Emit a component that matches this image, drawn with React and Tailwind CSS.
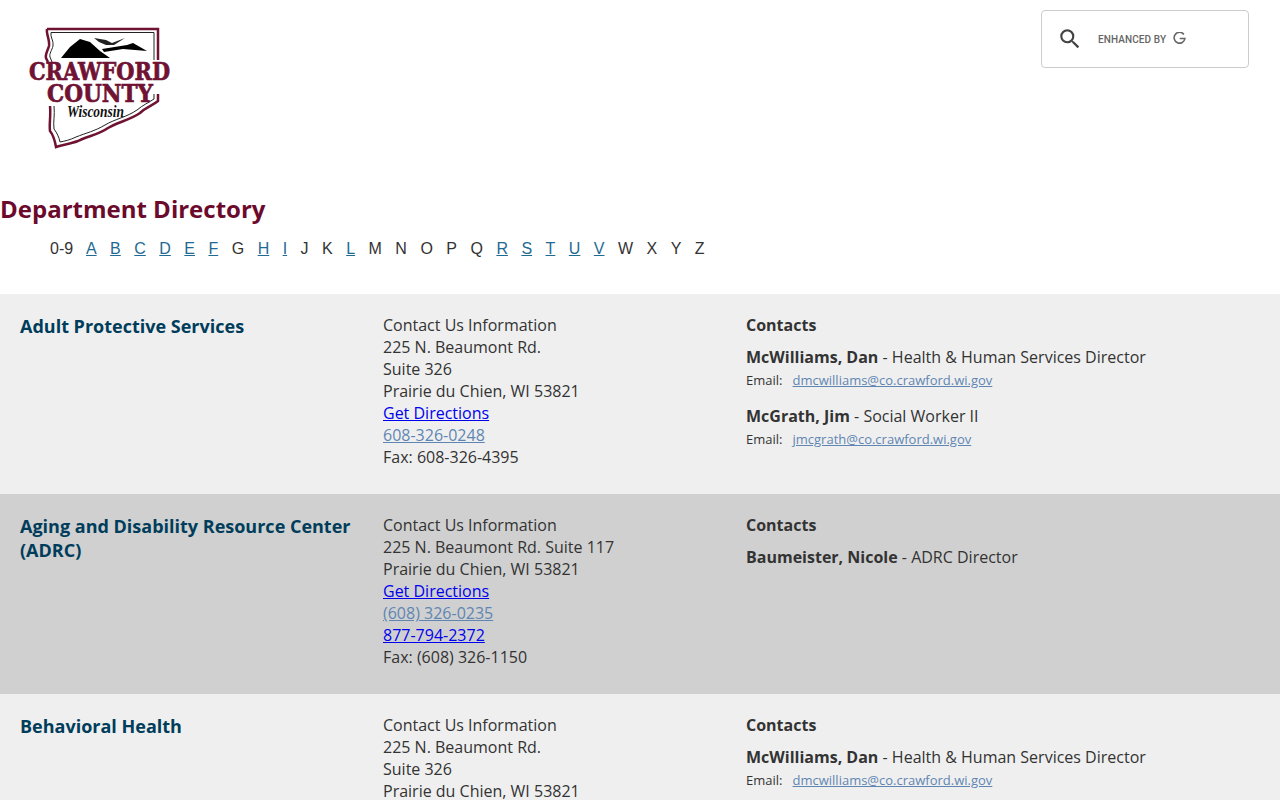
import React from 'react';
import { MdSearch } from 'react-icons/md';

const letters = [
  ['A', 1], ['B', 1], ['C', 1], ['D', 1], ['E', 1], ['F', 1], ['G', 0], ['H', 1], ['I', 1], ['J', 0], ['K', 0], ['L', 1], ['M', 0],
  ['N', 0], ['O', 0], ['P', 0], ['Q', 0], ['R', 1], ['S', 1], ['T', 1], ['U', 1], ['V', 1], ['W', 0], ['X', 0], ['Y', 0], ['Z', 0],
];

const dan = { name: 'McWilliams, Dan', title: 'Health & Human Services Director', email: 'dmcwilliams@co.crawford.wi.gov' };
const jim = { name: 'McGrath, Jim', title: 'Social Worker II', email: 'jmcgrath@co.crawford.wi.gov' };
const nicole = { name: 'Baumeister, Nicole', title: 'ADRC Director' };

const departments = [
  {
    name: 'Adult Protective Services',
    bg: 'bg-[#efefef]',
    lines: ['225 N. Beaumont Rd.', 'Suite 326', 'Prairie du Chien, WI 53821'],
    phones: ['608-326-0248'],
    fax: 'Fax: 608-326-4395',
    contacts: [dan, jim],
  },
  {
    name: 'Aging and Disability Resource Center (ADRC)',
    bg: 'bg-[#d0d0d0]',
    lines: ['225 N. Beaumont Rd. Suite 117', 'Prairie du Chien, WI 53821'],
    phones: ['(608) 326-0235'],
    tollFree: '877-794-2372',
    fax: 'Fax: (608) 326-1150',
    contacts: [nicole],
  },
  {
    name: 'Behavioral Health',
    bg: 'bg-[#efefef]',
    lines: ['225 N. Beaumont Rd.', 'Suite 326', 'Prairie du Chien, WI 53821'],
    phones: ['608-326-0248'],
    fax: 'Fax: 608-326-4395',
    contacts: [dan],
  },
];

function Logo() {
  const outline = 'M47 29 L158 29 L158 60 M158 94 L158 101 C152 106 146 107 140 113 C130 120 118 122 108 128 C98 135 88 136 78 141 C70 144 62 145 56 147 C55 141 54 136 50 131 C49 124 51 116 50 106 M47 29 C46 34 50 40 49 46 C48 50 45 54 46 58 L48 62';
  const inner = 'M51 32.5 L154 32.5 L154 60 M154 94 L154 99 C148 103 143 105 137 110 C127 117 115 119 105 125 C95 131 86 133 76 137 C70 140 65 141 60 142 C59 137 57 133 54 129 C53 122 55 115 54 106 M51 32.5 C50 37 54 41 53 46 C52 50 49 54 50 57 L52 62';
  return (
    <svg width="200" height="160" viewBox="0 0 200 160" className="block">
      <path d={outline} fill="none" stroke="#6f1233" strokeWidth="2.5" />
      <path d={inner} fill="none" stroke="#222" strokeWidth="1" />
      <path d="M61 58 L70 47 L80 39 L90 42 L100 51 L110 58 Z" fill="#000" />
      <path d="M102 49 L127 45 L133 43 L147 51 L123 49 L104 52 Z" fill="#000" />
      <path d="M94 38 L106 40 L112 43 L125 38 L114 45 L106 45 L99 42 Z" fill="#222" />
      <text x="29" y="80" textLength="141" lengthAdjust="spacingAndGlyphs" fill="#6f1233" stroke="#6f1233" strokeWidth="0.7" fontFamily="'DejaVu Serif', serif" fontWeight="700" fontSize="24">CRAWFORD</text>
      <text x="47" y="102" textLength="106" lengthAdjust="spacingAndGlyphs" fill="#6f1233" stroke="#6f1233" strokeWidth="0.7" fontFamily="'DejaVu Serif', serif" fontWeight="700" fontSize="24">COUNTY</text>
      <text x="67" y="117" textLength="57" lengthAdjust="spacingAndGlyphs" fill="#111" fontFamily="'Liberation Serif', serif" fontStyle="italic" fontWeight="700" fontSize="16">Wisconsin</text>
    </svg>
  );
}

function SearchBox() {
  return (
    <div className="w-[208px] h-[58px] mt-2.5 mr-[31px] border border-[#cccccc] rounded flex items-center pl-[15px] bg-white">
      <MdSearch className="text-[#444] shrink-0" size={26} />
      <span className="ml-[15px] mt-[2px] text-[10px] tracking-[0.1px] font-medium text-[#666] font-['Roboto',sans-serif]">ENHANCED BY</span>
      <svg width="13" height="13" viewBox="0 0 12 12" className="ml-[7px] -mt-[1px]">
        <path d="M10 2.2 A5 5 0 1 0 11 6 L6.2 6" fill="none" stroke="#666" strokeWidth="1.5" />
      </svg>
    </div>
  );
}

function Contact({ contact }) {
  return (
    <div className="mt-2.5 mb-[15px]">
      <div><strong className="font-bold">{contact.name}</strong> - {contact.title}</div>
      {contact.email && (
        <div className="text-[13px] flex h-[22px] pt-[2px] items-center">
          <span className="w-[46.5px]">Email:</span>
          <a href="#" className="text-[#5f86b3] underline">{contact.email}</a>
        </div>
      )}
    </div>
  );
}

function DepartmentRow({ dept }) {
  return (
    <div className={`${dept.bg} h-[200px] pt-5 pl-5 grid grid-cols-[363px_363px_1fr] overflow-hidden`}>
      <h3 className="pr-2 text-lg leading-6 font-bold text-[#003d5b]">{dept.name}</h3>
      <div>
        <div>Contact Us Information</div>
        {dept.lines.map((line) => <div key={line}>{line}</div>)}
        <div><a href="#" className="text-[#0000ee] underline">Get Directions</a></div>
        {dept.phones.map((phone) => (
          <div key={phone}><a href="#" className="text-[#5f86b3] underline">{phone}</a></div>
        ))}
        {dept.tollFree && <div><a href="#" className="text-[#0000ee] underline">{dept.tollFree}</a></div>}
        <div>{dept.fax}</div>
      </div>
      <div>
        <div className="font-bold">Contacts</div>
        {dept.contacts.map((c) => <Contact key={c.name} contact={c} />)}
      </div>
    </div>
  );
}

export default function App() {
  return (
    <div className="h-[800px] overflow-hidden bg-white text-[#333] text-base leading-[22px] font-['Open_Sans',sans-serif]">
      <header className="h-[190px] flex justify-between">
        <Logo />
        <SearchBox />
      </header>

      <h1 className="text-2xl leading-[38px] font-bold text-[#6b0a2c]">Department Directory</h1>

      <nav className="pl-[50px] mt-[10px] h-[36px] flex gap-[13.47px] font-['Liberation_Sans',sans-serif] text-[#333]">
        <span className="w-[22.5px] whitespace-nowrap">0-9</span>
        {letters.map(([l, linked]) => linked
          ? <a key={l} href="#" className="text-[#1f6a93] underline">{l}</a>
          : <span key={l}>{l}</span>)}
      </nav>

      <section className="mt-[20px]">
        {departments.map((d) => <DepartmentRow key={d.name} dept={d} />)}
      </section>
    </div>
  );
}
